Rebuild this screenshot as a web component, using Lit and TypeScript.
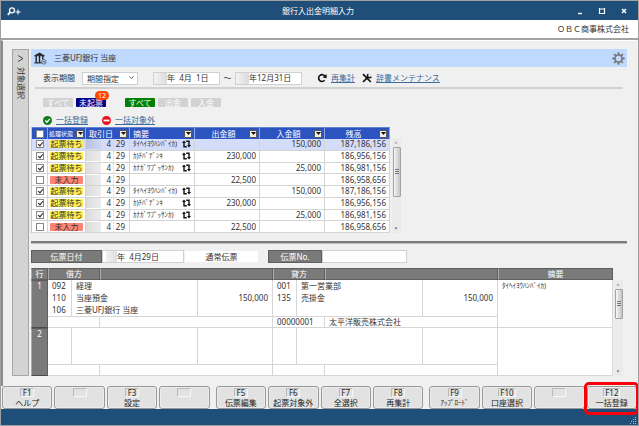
import { LitElement, html, css, svg, nothing } from "lit";
import { customElement, property } from "lit/decorators.js";
import { classMap } from "lit/directives/class-map.js";

const base = css`
  *, *::before, *::after { box-sizing: border-box; }
  button, input, select { font: inherit; color: inherit; margin: 0; border-radius: 0; }
  a { color: #3d6b99; text-decoration: underline; }
  table { border-collapse: separate; border-spacing: 0; table-layout: fixed; }
  th { font-weight: 400; }
  svg { display: block; }
`;

interface Txn { state: "wait" | "none"; memo: string; out: string; in: string; bal: string; }

const cycle: Txn[] = [
  { state: "wait", memo: "ﾀｲﾍｲﾖｳﾊﾝﾊﾞｲｶ)", out: "", in: "150,000", bal: "187,186,156" },
  { state: "wait", memo: "ｶ)ﾁﾊﾞﾃﾞﾝｷ", out: "230,000", in: "", bal: "186,956,156" },
  { state: "wait", memo: "ｶﾅｶﾞﾜﾌﾟｯｻﾝｶ)", out: "", in: "25,000", bal: "186,981,156" },
  { state: "none", memo: "", out: "22,500", in: "", bal: "186,958,656" },
];
const txns = [...cycle, ...cycle];

const keyGroups: [string, string][][] = [
  [["F1", "ヘルプ"], ["", ""], ["F3", "設定"], ["", ""]],
  [["F5", "伝票編集"], ["F6", "起票対象外"], ["F7", "全選択"], ["F8", "再集計"]],
  [["F9", "ｱｯﾌﾟﾛｰﾄﾞ"], ["F10", "口座選択"], ["", ""], ["F12", "一括登録"]],
];

@customElement("scroll-rail")
class ScrollRail extends LitElement {
  @property({ type: Number }) size = 50;
  static styles = [base, css`
    :host { display: flex; flex-direction: column; width: 9px; background: #ebebeb; align-items: center; }
    .arrow { width: 9px; height: 9px; display: grid; place-items: center; flex: none; }
    .thumb { width: 8px; border: 1px solid #a3a3a3; border-radius: 1px; display: grid; place-items: center;
      background: linear-gradient(90deg, #f6f6f6, #dcdcdc 50%, #c4c4c4); }
    .grow { flex: 1; }
  `];
  render() {
    return html`
      <div class="arrow"><svg width="5" height="3"><path d="M.5 2.5h3L2 .5z" fill="#999" /></svg></div>
      <div class="thumb" style="height:${this.size}px">
        <svg width="4" height="6"><path d="M0 .5h4M0 2.5h4M0 4.5h4" stroke="#777" /></svg>
      </div>
      <div class="grow"></div>
      <div class="arrow"><svg width="5" height="3"><path d="M.5 .5h3L2 2.5z" fill="#666" /></svg></div>`;
  }
}

@customElement("txn-table")
class TxnTable extends LitElement {
  static styles = [base, css`
    :host { display: flex; gap: 2px; width: 370px; height: 106px; }
    table { width: 359px; height: 106px; border-left: 1px solid #c8c8c8; }
    .c-check { width: 16px; } .c-state { width: 38px; } .c-day { width: 44px; }
    th { background: #2b54c0; color: #fff; height: 12px; padding: 0 2px 0 3px; line-height: 10px;
      border-right: 1px solid #8ea6e2; border-top: 1px solid #6482d2; }
    .head { display: flex; align-items: center; justify-content: space-between; height: 10px; }
    .center .head span { flex: 1; text-align: center; }
    .tiny { font-size: 6px; white-space: nowrap; }
    .state-head { padding: 0 1px; }
    .filter { width: 8px; height: 8px; padding: 0; border: 1px solid #555; border-radius: 1px; background: #f4efe4;
      display: grid; place-items: center; flex: none; }
    td { background: #fff; padding: 0 3px; line-height: 10px; border-right: 1px solid #d4d4d4; border-bottom: 1px solid #d4d4d4; white-space: nowrap; }
    tr.sel td { background: #d3dcf8; }
    .box { padding: 0; text-align: center; }
    th.box { padding: 0; }
    input { appearance: none; display: block; width: 8px; height: 8px; margin: 0 auto; background: #fff; border: 1px solid #888; position: relative; }
    input:checked::after { content: ""; position: absolute; left: 2px; top: 0; width: 3px; height: 5px;
      border: solid #222; border-width: 0 1px 1px 0; transform: rotate(40deg); }
    .pad { padding: 0 1px; }
    .tag { display: block; height: 8px; line-height: 8px; border-radius: 1px; text-align: center; background: #fff04f; margin: 0 1px; }
    .tag.none { background: #fd8374; }
    td.day { padding: 0; height: 11px; }
    .parts { display: grid; grid-template-columns: 15px 12px 1fr; height: 10px; line-height: 10px; text-align: right; }
    .mask { background: linear-gradient(90deg, #dcdcdc, #ececec); }
    .sel .mask { background: linear-gradient(90deg, #b9c2dd, #cdd6f0); }
    .parts .m { padding-right: 2px; }
    .parts .d { padding-right: 4px; border-left: 1px dotted #d0d0d0; }
    .memo { display: flex; align-items: center; justify-content: space-between; font-size: 7px; }
    .num { text-align: right; }
    .rail { margin-top: 11px; }
  `];
  private filter() {
    return html`<button class="filter" aria-label="絞り込み"><svg width="5" height="3"><path d="M0 0h5L2.5 3z" fill="#111" /></svg></button>`;
  }
  private head(label: string) {
    return html`<th class="center"><div class="head"><span>${label}</span>${this.filter()}</div></th>`;
  }
  render() {
    return html`
      <table>
        <colgroup><col class="c-check" /><col class="c-state" /><col class="c-day" /><col /><col /><col /><col /></colgroup>
        <thead><tr>
          <th class="box"><input type="checkbox" aria-label="すべて選択" /></th>
          <th class="state-head"><div class="head"><span class="tiny">処理状態</span>${this.filter()}</div></th>
          <th><div class="head"><span>取引日</span>${this.filter()}</div></th>
          <th><div class="head"><span>摘要</span>${this.filter()}</div></th>
          ${this.head("出金額")}${this.head("入金額")}${this.head("残高")}
        </tr></thead>
        <tbody>
          ${txns.map((t, i) => html`<tr class=${i === 0 ? "sel" : ""}>
            <td class="box"><input type="checkbox" aria-label="選択" .checked=${t.state === "wait"} /></td>
            <td class="pad"><span class="tag ${t.state}">${t.state === "wait" ? "起票待ち" : "未入力"}</span></td>
            <td class="day"><div class="parts"><span class="mask"></span><span class="m">4</span><span class="d">29</span></div></td>
            <td><div class="memo"><span>${t.memo}</span>${t.memo ? html`
              <svg width="9" height="8" viewBox="0 0 9 8" fill="none" stroke="#111" stroke-width="1.4">
                <path d="M2 2.5V6.8H4.8M7 5.5V1.2H4.2" /><path d="M0 3L2 .6L4 3zM5 5L7 7.4L9 5z" fill="#111" stroke="none" />
              </svg>` : nothing}</div></td>
            <td class="num">${t.out}</td><td class="num">${t.in}</td><td class="num">${t.bal}</td>
          </tr>`)}
        </tbody>
      </table>
      <scroll-rail .size=${50} class="rail"></scroll-rail>`;
  }
}

@customElement("voucher-table")
class VoucherTable extends LitElement {
  static styles = [base, css`
    :host { display: flex; gap: 1px; margin-right: 4px; }
    table { flex: 1; width: 0; }
    .w-row { width: 17px; } .w-code { width: 24px; } .w-mid { width: 28px; } .w-amt { width: 75px; } .w-memo { width: 115px; }
    th { background: #7a7a7a; color: #fff; padding: 0; height: 12px; line-height: 10px; border: 1px solid #5f5f5f; border-left-color: #ababab; }
    tbody th { vertical-align: top; border-bottom-color: #4a4a4a; }
    td { background: #fff; height: 12px; line-height: 12px; padding: 0 4px; white-space: nowrap; border-right: 1px solid #d6d6d6; }
    .low td, .memo { border-bottom: 1px solid #d6d6d6; }
    .low td { border-top: 1px solid #d6d6d6; line-height: 10px; }
    .num { text-align: right; }
    .memo { font-size: 7px; vertical-align: top; }
    .rail { margin-top: 12px; }
  `];
  private block(no: string, lines: string[][], low: string[], memo: string) {
    return html`
      ${lines.map((l, i) => html`<tr>
        ${i === 0 ? html`<th rowspan="4" scope="row">${no}</th>` : nothing}
        <td>${l[0]}</td><td colspan="2">${l[1]}</td><td class="num">${l[2]}</td>
        <td>${l[3]}</td><td colspan="2">${l[4]}</td><td class="num">${l[5]}</td>
        ${i === 0 ? html`<td rowspan="4" class="memo">${memo}</td>` : nothing}
      </tr>`)}
      <tr class="low"><td colspan="2">${low[0]}</td><td colspan="2">${low[1]}</td><td colspan="2">${low[2]}</td><td colspan="2">${low[3]}</td></tr>`;
  }
  render() {
    const blank = ["", "", "", "", "", ""];
    return html`
      <table>
        <colgroup>
          <col class="w-row" /><col class="w-code" /><col class="w-mid" /><col /><col class="w-amt" />
          <col class="w-code" /><col class="w-mid" /><col /><col class="w-amt" /><col class="w-memo" />
        </colgroup>
        <thead><tr><th>行</th><th colspan="2">借方</th><th colspan="2"></th><th colspan="2">貸方</th><th colspan="2"></th><th>摘要</th></tr></thead>
        <tbody>
          ${this.block("1", [
            ["092", "経理", "", "001", "第一営業部", ""],
            ["110", "当座預金", "150,000", "135", "売掛金", "150,000"],
            ["106", "三菱UFJ銀行 当座", "", "", "", ""],
          ], ["", "", "00000001", "太平洋販売株式会社"], "ﾀｲﾍｲﾖｳﾊﾝﾊﾞｲｶ)")}
          ${this.block("2", [blank, blank, blank], ["", "", "", ""], "")}
        </tbody>
      </table>
      <scroll-rail .size=${30} class="rail"></scroll-rail>`;
  }
}

const teeth = [0, 45, 90, 135, 180, 225, 270, 315];

@customElement("app-root")
class AppRoot extends LitElement {
  static styles = [base, css`
    :host { box-sizing: border-box; display: flex; flex-direction: column; min-height: 100vh; font: 8px/12px "Noto Sans", "Noto Sans CJK JP", sans-serif;
      color: #333; background: #f0f0f0; border: 1px solid #a0a0a0; overflow: hidden; }
    .title { display: grid; grid-template-columns: 1fr auto 1fr; align-items: center; height: 19px; padding: 1px 9px 0 6px; background: #1f4e79; color: #fff; }
    .wins { display: flex; justify-content: flex-end; gap: 12px; }
    .wins button, .title .find { border: 0; padding: 0; background: none; width: 10px; height: 10px; display: grid; place-items: center; }
    .title .find { width: 15px; }
    .company { background: #fff; height: 20px; line-height: 18px; text-align: right; padding: 0 9px; border-bottom: 2px solid #a3a3a3; }
    .body { flex: 1; display: flex; gap: 2px; padding: 8px 10px 10px 9px; border-left: 2px solid #8c8c8c; border-top: 1px solid #fff; margin-right: 1px; }
    .side { width: 17px; border: 1px solid #a6a6a6; background: #d3d3d3; padding: 4px 0; display: flex; flex-direction: column; align-items: center; gap: 4px; }
    .side span { writing-mode: vertical-rl; text-orientation: sideways; line-height: 12px; }
    .main { flex: 1; min-width: 0; display: flex; flex-direction: column; }
    .account { height: 18px; background: #bfd9ff; display: flex; align-items: center; padding: 0 2px 0 3px; gap: 7px; }
    h1 { font: inherit; margin: 0; flex: 1; }
    .plain { border: 0; background: none; padding: 0; }
    .period { height: 22px; display: flex; align-items: center; margin: 0 4px; padding: 2px 0 0 8px; border-bottom: 2px solid #d0d0d0; }
    .pick { display: grid; margin-left: 7px; margin-right: 15px; width: 56px; height: 13px; align-items: center; }
    .pick > * { grid-area: 1 / 1; }
    .pick svg { justify-self: end; margin-right: 4px; pointer-events: none; }
    select { appearance: none; width: 100%; height: 13px; border: 1px solid #d0d0d0; background: #fff; padding: 0 4px; line-height: 11px; outline: 0; }
    .date { display: flex; width: 67px; height: 13px; border: 1px solid #d0d0d0; background: #fff; }
    .date i { width: 13px; background: linear-gradient(90deg, #f2f2f2, #dcdcdc); }
    .date input, .no { border: 0; background: none; padding: 0; min-width: 0; flex: 1; height: 11px; }
    .wave { width: 15px; text-align: center; }
    .act { display: flex; align-items: center; gap: 4px; }
    .period .act { margin-left: 7px; }
    .period .wave + .date + .act { margin-left: 15px; }
    .tabs { display: flex; gap: 3px; margin: 9px 0 7px 12px; }
    .tabs button { width: 30px; height: 9px; line-height: 9px; border: 0; padding: 0; border-radius: 1px; background: #d2d2d2; color: #fff; position: relative; }
    .tabs .navy { background: #00008b; margin-right: 16px; }
    .tabs .green { background: #008000; }
    .badge { position: absolute; right: -3px; top: -7px; width: 14px; height: 9px; border-radius: 5px; background: #ff4500; font-size: 7px; line-height: 9px; }
    .links { display: flex; gap: 14px; margin: 0 0 1px 12px; }
    .rule { height: 3px; background: #7c7c7c; border-bottom: 1px solid #bdbdbd; margin: 8px 0 6px; }
    .voucher { display: flex; height: 13px; margin-bottom: 5px; }
    .voucher label { background: #7a7a7a; color: #fff; border: 1px solid #5f5f5f; text-align: center; line-height: 11px; width: 71px; }
    .voucher .date { width: 82px; }
    .voucher .date i { width: 11px; margin-left: 3px; }
    .kind { background: #fff; width: 73px; margin: 1px 10px 1px 1px; text-align: center; line-height: 11px; }
    .voucher .short { width: 54px; }
    .voucher .no { flex: none; width: 85px; height: 13px; border: 1px solid #d0d0d0; background: #fff; padding: 0 3px; }
    .keys { display: flex; gap: 6px; padding: 0 1px; }
    .group { flex: 1; display: flex; gap: 2px; min-width: 0; }
    .slot { flex: 1; position: relative; min-width: 0; display: flex; }
    .key { flex: 1; height: 23px; padding: 1px 0 0; border: 1px solid #999; border-radius: 3px; background: #e2e2e2; box-shadow: inset 0 0 0 1px #ececec;
      display: flex; flex-direction: column; align-items: center; white-space: nowrap; color: #222; }
    .cap { min-width: 14px; height: 9px; line-height: 8px; padding: 0 1px; border: 1px solid #f8f8f8; border-top-color: #bababa; border-left-color: #bababa; }
    .lbl { line-height: 11px; }
    .small { font-size: 7px; }
    .ring { position: absolute; inset: -4px -2px -6px -3px; border: 3px solid #f8000c; border-radius: 5px; pointer-events: none; z-index: 1; }
    .foot { height: 16px; background: #1f4e79; display: flex; justify-content: flex-end; align-items: flex-end; padding: 1px; }
  `];
  render() {
    return html`
      <header class="title">
        <button class="find" aria-label="検索"><svg width="15" height="9" viewBox="0 0 15 9" fill="none" stroke="#fff">
          <circle cx="5" cy="3.3" r="2.5" stroke-width="1.3" /><path d="M3.2 5.2L.8 7.8" stroke-width="1.8" /><path d="M8.5 5h5M11 2.5v5" stroke-width="1.1" /></svg></button>
        <span>銀行入出金明細入力</span>
        <div class="wins">
          <button aria-label="最小化"><svg width="8" height="8"><path d="M2 6.5h4" stroke="#fff" stroke-width="1.4" /></svg></button>
          <button aria-label="最大化"><svg width="8" height="8"><path d="M1.5 1v5.5h5V1M1 2h6" fill="none" stroke="#fff" stroke-width="1.2" /></svg></button>
          <button aria-label="閉じる"><svg width="8" height="8"><path d="M2 2l4 4M6 2L2 6" stroke="#fff" stroke-width="1.5" /></svg></button>
        </div>
      </header>
      <div class="company">ＯＢＣ商事株式会社</div>
      <div class="body">
        <button class="side">
          <svg width="7" height="9" fill="none" stroke="#444"><path d="M1 1.5L6 4.5L1 7.5" /></svg><span>対象選択</span>
        </button>
        <main class="main">
          <div class="account">
            <svg width="13" height="13" viewBox="0 0 13 13" fill="none" stroke="#222">
              <path d="M.5 3.8L5.5 1l5 2.8z" fill="#222" stroke-width=".8" /><path d="M2.2 4v6M5.5 4v6M8.8 4v3.5" stroke-width="1.4" /><path d="M.5 10.8h7" stroke-width="1.3" />
              <circle cx="9.8" cy="9.8" r="2.3" fill="#bfd9ff" stroke="#456" stroke-width=".8" /><path d="M8.7 9.8h2.2" stroke-width=".8" />
            </svg>
            <h1>三菱UFJ銀行 当座</h1>
            <button class="plain" aria-label="設定"><svg width="13" height="13" viewBox="-6.5 -6.5 13 13">
              ${teeth.map(a => svg`<path d="M-1.2 -3.5L-.9 -6.2H.9L1.2 -3.5z" fill="#7b7b7b" transform="rotate(${a})" />`)}
              <circle r="3.5" fill="none" stroke="#7b7b7b" stroke-width="1.6" /></svg></button>
          </div>
          <div class="period">
            <label for="span">表示期間</label>
            <div class="pick">
              <select id="span"><option>期間指定</option></select>
              <svg width="5" height="4" fill="none" stroke="#555"><path d="M.5 .5l2 2l2-2" /></svg>
            </div>
            <div class="date"><i></i><input aria-label="開始日" value="年  4月  1日" /></div>
            <span class="wave">～</span>
            <div class="date"><i></i><input aria-label="終了日" value="年12月31日" /></div>
            <span class="act"><svg width="10" height="10" viewBox="0 0 10 10"><path d="M7.6 7.3A3.4 3.4 0 1 1 8 3.4" fill="none" stroke="#111" stroke-width="1.6" /><path d="M5.6 4.6L9.6 5.2V1z" fill="#111" /></svg><a href="#">再集計</a></span>
            <span class="act"><svg width="10" height="10" viewBox="0 0 10 10" fill="none" stroke="#111"><path d="M1 1.2L8.8 9" stroke-width="1.7" /><path d="M1 9L6.5 3.6" stroke-width="1.7" /><path d="M6.4 1A2 2 0 1 0 9.2 3.6" stroke-width="1.4" /></svg><a href="#">辞書メンテナンス</a></span>
          </div>
          <div class="tabs">
            <button>すべて</button><button class="navy">未起票<span class="badge">12</span></button>
            <button class="green">すべて</button><button>出金</button><button>入金</button>
          </div>
          <div class="links">
            <span class="act"><svg width="9" height="9"><circle cx="4.5" cy="4.5" r="4.5" fill="#137a1c" /><path d="M2.3 4.5L4 6.2L6.8 2.9" fill="none" stroke="#fff" stroke-width="1.3" /></svg><a href="#">一括登録</a></span>
            <span class="act"><svg width="9" height="9"><circle cx="4.5" cy="4.5" r="4.5" fill="#e8101c" /><path d="M1.5 4.5h6" stroke="#fff" stroke-width="1.8" /></svg><a href="#">一括対象外</a></span>
          </div>
          <txn-table></txn-table>
          <div class="rule"></div>
          <div class="voucher">
            <label for="vdate">伝票日付</label>
            <div class="date"><i></i><input id="vdate" value="年  4月29日" /></div>
            <span class="kind">通常伝票</span>
            <label class="short" for="vno">伝票No.</label><input class="no" id="vno" />
          </div>
          <voucher-table></voucher-table>
        </main>
      </div>
      <div class="keys">
        ${keyGroups.map(g => html`<div class="group">${g.map(([k, l]) => html`<div class="slot">
          <button class="key" aria-label=${l || "未割当"}><span class="cap">${k}</span><span class=${classMap({ lbl: true, small: k === "F9" })}>${l}</span></button>
          ${k === "F12" ? html`<span class="ring"></span>` : nothing}
        </div>`)}</div>`)}
      </div>
      <footer class="foot"><svg width="7" height="7" fill="#a9c0d8"><path d="M5 0h1v1h-1zM3 2h1v1h-1zM5 2h1v1h-1zM1 4h1v1h-1zM3 4h1v1h-1zM5 4h1v1h-1zM0 6h1v1h-1zM3 6h1v1h-1zM5 6h1v1h-1z" /></svg></footer>`;
  }
}
